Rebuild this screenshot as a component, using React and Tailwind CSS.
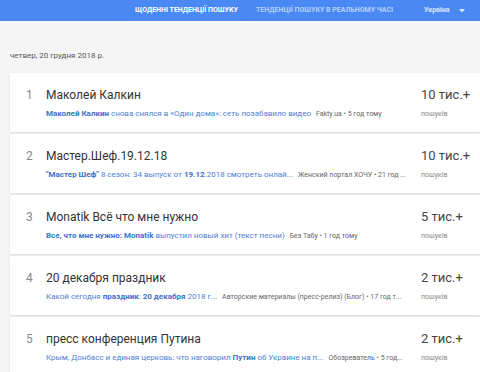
import React from 'react';

const rows = [
  {
    n: 1,
    title: 'Маколей Калкин',
    parts: [['Маколей Калкин', true], [' снова снялся в «Один дома»: сеть позабавило видео', false]],
    src: 'Fakty.ua • 5 год тому',
    count: '10 тис.+',
  },
  {
    n: 2,
    title: 'Мастер.Шеф.19.12.18',
    parts: [['"Мастер Шеф"', true], [' 8 сезон: 34 выпуск от ', false], ['19.12', true], ['.2018 смотреть онлай...', false]],
    src: 'Женский портал ХОЧУ • 21 год ...',
    count: '10 тис.+',
  },
  {
    n: 3,
    title: 'Monatik Всё что мне нужно',
    parts: [['Все, что мне нужно: Monatik', true], [' выпустил новый хит (текст песни)', false]],
    src: 'Без Табу • 1 год тому',
    count: '5 тис.+',
  },
  {
    n: 4,
    title: '20 декабря праздник',
    parts: [['Какой сегодня ', false], ['праздник', true], [': ', false], ['20 декабря', true], [' 2018 г...', false]],
    src: 'Авторские материалы (пресс-релиз) (Блог) • 17 год т...',
    count: '2 тис.+',
  },
  {
    n: 5,
    title: 'пресс конференция Путина',
    parts: [['Крым, Донбасс и единая церковь: что наговорил ', false], ['Путин', true], [' об Украине на п...', false]],
    src: 'Обозреватель • 5 год...',
    count: '2 тис.+',
  },
];

export default function App() {
  return (
    <div className="w-[480px] h-[372px] overflow-hidden bg-[#f5f5f5]" style={{ fontFamily: 'Roboto, "Liberation Sans", sans-serif' }}>
      <div className="h-[21px] bg-[#4a89f3] flex items-stretch text-[7px] font-bold">
        <div className="w-[126px]" />
        <div className="w-[121px] flex items-center justify-center text-white relative">
          ЩОДЕННІ ТЕНДЕНЦІЇ ПОШУКУ
          <div className="absolute left-0 right-0 bottom-[-2px] h-[2px] bg-[#fdfbef]" />
        </div>
        <div className="ml-[9px] flex items-center text-white/60">ТЕНДЕНЦІЇ ПОШУКУ В РЕАЛЬНОМУ ЧАСІ</div>
        <div className="ml-[31px] flex items-center text-white/80 gap-[10px]">
          Україна
          <svg width="6" height="4" viewBox="0 0 6 4"><path d="M0 0h6L3 3.5z" fill="rgba(255,255,255,0.8)" /></svg>
        </div>
      </div>
      <div className="pl-[10px] pt-[30px] text-[8px] text-[#555] leading-[10px]">четвер, 20 грудня 2018 р.</div>
      <div className="ml-[10px] mt-[12px] flex flex-col gap-[2px]">
        {rows.map(r => (
          <div key={r.n} className="h-[59px] bg-white shadow-[0_1px_2px_rgba(0,0,0,0.12)] flex">
            <div className="w-[36px] pl-[16px] pt-[15px] text-[12px] text-[#888] leading-[14px]">{r.n}</div>
            <div className="w-[375px] pt-[15px]">
              <div className="text-[12px] text-[#333] leading-[15px]">{r.title}</div>
              <div className="mt-[6px] text-[8px] leading-[10px] whitespace-nowrap flex">
                <span className="text-[#4e80d6]">
                  {r.parts.map(([t, b], i) => (
                    <span key={i} className={b ? 'font-bold text-[#3f6fc6]' : ''}>{t}</span>
                  ))}
                </span>
                <span className="ml-[5px] text-[7px] text-[#666]">{r.src}</span>
              </div>
            </div>
            <div className="pt-[14px]">
              <div className="text-[13px] text-[#444] leading-[16px]">{r.count}</div>
              <div className="mt-[7px] text-[7px] text-[#888] leading-[9px]">пошуків</div>
            </div>
          </div>
        ))}
      </div>
    </div>
  );
}
